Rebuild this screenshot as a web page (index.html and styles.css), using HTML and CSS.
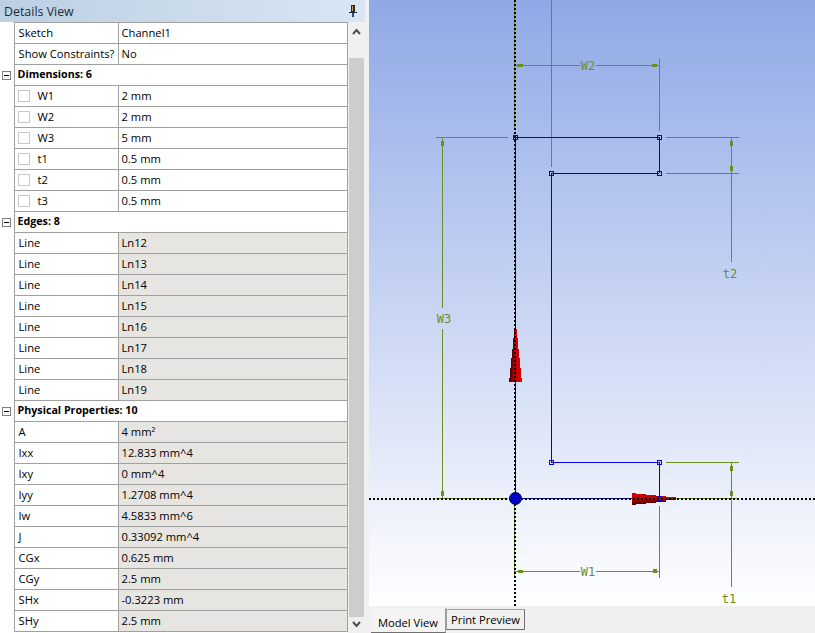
FILE: index.html
```html
<!DOCTYPE html>
<html lang="en">
<head>
    <meta charset="UTF-8">
    <title>Details View</title>
    <link rel="stylesheet" href="styles.css">
</head>
<body>
    <div class="app">
        <div class="details">
            <div class="title-bar">
                <span>Details View</span>
                <svg class="pin" width="8" height="12" viewBox="0 0 8 12">
                    <rect x="2" y="0" width="4" height="7" fill="#1a2a4a"/>
                    <rect x="3" y="1" width="1" height="5" fill="#d9a441"/>
                    <rect x="0" y="7" width="8" height="1" fill="#1a2a4a"/>
                    <rect x="3" y="8" width="2" height="4" fill="#3b4a66"/>
                </svg>
            </div>
            <div class="details-body">
                <table class="grid">
                    <colgroup>
                        <col class="col-gutter">
                        <col class="col-name">
                        <col class="col-value">
                    </colgroup>
                    <tr><td class="gutter"></td><td>Sketch</td><td>Channel1</td></tr>
                    <tr><td class="gutter"></td><td>Show Constraints?</td><td>No</td></tr>
                    <tr class="group"><td class="gutter"><span class="minus"></span></td><td colspan="2">Dimensions: 6</td></tr>
                    <tr><td class="gutter"></td><td><span class="check"></span>W1</td><td>2 mm</td></tr>
                    <tr><td class="gutter"></td><td><span class="check"></span>W2</td><td>2 mm</td></tr>
                    <tr><td class="gutter"></td><td><span class="check"></span>W3</td><td>5 mm</td></tr>
                    <tr><td class="gutter"></td><td><span class="check"></span>t1</td><td>0.5 mm</td></tr>
                    <tr><td class="gutter"></td><td><span class="check"></span>t2</td><td>0.5 mm</td></tr>
                    <tr><td class="gutter"></td><td><span class="check"></span>t3</td><td>0.5 mm</td></tr>
                    <tr class="group"><td class="gutter"><span class="minus"></span></td><td colspan="2">Edges: 8</td></tr>
                    <tr class="ro"><td class="gutter"></td><td>Line</td><td>Ln12</td></tr>
                    <tr class="ro"><td class="gutter"></td><td>Line</td><td>Ln13</td></tr>
                    <tr class="ro"><td class="gutter"></td><td>Line</td><td>Ln14</td></tr>
                    <tr class="ro"><td class="gutter"></td><td>Line</td><td>Ln15</td></tr>
                    <tr class="ro"><td class="gutter"></td><td>Line</td><td>Ln16</td></tr>
                    <tr class="ro"><td class="gutter"></td><td>Line</td><td>Ln17</td></tr>
                    <tr class="ro"><td class="gutter"></td><td>Line</td><td>Ln18</td></tr>
                    <tr class="ro"><td class="gutter"></td><td>Line</td><td>Ln19</td></tr>
                    <tr class="group"><td class="gutter"><span class="minus"></span></td><td colspan="2">Physical Properties: 10</td></tr>
                    <tr class="ro"><td class="gutter"></td><td>A</td><td>4 mm²</td></tr>
                    <tr class="ro"><td class="gutter"></td><td>Ixx</td><td>12.833 mm^4</td></tr>
                    <tr class="ro"><td class="gutter"></td><td>Ixy</td><td>0 mm^4</td></tr>
                    <tr class="ro"><td class="gutter"></td><td>Iyy</td><td>1.2708 mm^4</td></tr>
                    <tr class="ro"><td class="gutter"></td><td>Iw</td><td>4.5833 mm^6</td></tr>
                    <tr class="ro"><td class="gutter"></td><td>J</td><td>0.33092 mm^4</td></tr>
                    <tr class="ro"><td class="gutter"></td><td>CGx</td><td>0.625 mm</td></tr>
                    <tr class="ro"><td class="gutter"></td><td>CGy</td><td>2.5 mm</td></tr>
                    <tr class="ro"><td class="gutter"></td><td>SHx</td><td>-0.3223 mm</td></tr>
                    <tr class="ro"><td class="gutter"></td><td>SHy</td><td>2.5 mm</td></tr>
                </table>
                <div class="scrollbar">
                    <svg class="arrow" width="17" height="36" viewBox="0 0 17 36">
                        <polyline points="5,12 8.5,8 12,12" fill="none" stroke="#505050" stroke-width="2"/>
                    </svg>
                    <div class="thumb"></div>
                    <svg class="arrow" width="17" height="16" viewBox="0 0 17 16">
                        <polyline points="5,5 8.5,9 12,5" fill="none" stroke="#505050" stroke-width="2"/>
                    </svg>
                </div>
            </div>
        </div>

        <div class="view">
            <svg class="sketch" width="446" height="606" viewBox="369 0 446 606">
                <defs>
                    <linearGradient id="coneUp" x1="0" y1="0" x2="1" y2="0">
                        <stop offset="0" stop-color="#4a0000"/>
                        <stop offset="0.45" stop-color="#cc0000"/>
                        <stop offset="1" stop-color="#d40000"/>
                    </linearGradient>
                    <linearGradient id="coneRight" x1="0" y1="0" x2="0" y2="1">
                        <stop offset="0" stop-color="#d40000"/>
                        <stop offset="0.5" stop-color="#b80000"/>
                        <stop offset="1" stop-color="#4a0000"/>
                    </linearGradient>
                </defs>

                <!-- dimensions -->
                <g class="dim">
                    <line x1="514.5" y1="0" x2="514.5" y2="130"/>
                    <line x1="514.5" y1="498" x2="514.5" y2="578"/>
                    <line x1="551.5" y1="0" x2="551.5" y2="167"/>
                    <line x1="659.5" y1="59" x2="659.5" y2="131"/>
                    <line x1="515" y1="65.5" x2="580" y2="65.5"/>
                    <line x1="596" y1="65.5" x2="659" y2="65.5"/>

                    <line x1="436" y1="137.5" x2="508" y2="137.5"/>
                    <line x1="666" y1="137.5" x2="739" y2="137.5"/>
                    <line x1="666" y1="173.5" x2="739" y2="173.5"/>
                    <line x1="442.5" y1="137" x2="442.5" y2="308"/>
                    <line x1="442.5" y1="329" x2="442.5" y2="498"/>
                    <line x1="436" y1="498.5" x2="508" y2="498.5"/>

                    <line x1="731.5" y1="137" x2="731.5" y2="262"/>
                    <line x1="731.5" y1="462" x2="731.5" y2="587"/>
                    <line x1="666" y1="462.5" x2="739" y2="462.5"/>
                    <line x1="666" y1="498.5" x2="739" y2="498.5"/>

                    <line x1="659.5" y1="506" x2="659.5" y2="578"/>
                    <line x1="515" y1="571.5" x2="580" y2="571.5"/>
                    <line x1="596" y1="571.5" x2="659" y2="571.5"/>
                </g>
                <g class="tick">
                    <rect x="517" y="64" width="6" height="3"/>
                    <rect x="652" y="64" width="5" height="3"/>
                    <rect x="441" y="141" width="3" height="5"/>
                    <rect x="441" y="491" width="3" height="5"/>
                    <rect x="730" y="141" width="3" height="5"/>
                    <rect x="730" y="166" width="3" height="5"/>
                    <rect x="730" y="466" width="3" height="5"/>
                    <rect x="730" y="491" width="3" height="5"/>
                    <rect x="518" y="570" width="5" height="3"/>
                    <rect x="653" y="569" width="4" height="4"/>
                </g>
                <g class="dim-label">
                    <text x="588" y="70">W2</text>
                    <text x="444" y="323">W3</text>
                    <text x="730" y="278">t2</text>
                    <text x="729" y="603">t1</text>
                    <text x="588" y="576">W1</text>
                </g>

                <!-- sketch outline -->
                <g class="edge">
                    <line x1="515.5" y1="137" x2="515.5" y2="498"/>
                    <line x1="515" y1="137.5" x2="659" y2="137.5"/>
                    <line x1="659.5" y1="137" x2="659.5" y2="173"/>
                    <line x1="551" y1="173.5" x2="659" y2="173.5"/>
                    <line x1="551.5" y1="173" x2="551.5" y2="462"/>
                    <line x1="551" y1="462.5" x2="659" y2="462.5"/>
                    <line x1="659.5" y1="462" x2="659.5" y2="498"/>
                    <line x1="515" y1="498.5" x2="659" y2="498.5"/>
                </g>

                <!-- axis triad -->
                <g fill="url(#coneUp)">
                    <rect x="514" y="329" width="3" height="9"/>
                    <rect x="513" y="338" width="5" height="11"/>
                    <rect x="512" y="349" width="7" height="9"/>
                    <rect x="511" y="358" width="9" height="10"/>
                    <rect x="510" y="368" width="11" height="10"/>
                    <rect x="509" y="378" width="13" height="4"/>
                </g>
                <g fill="url(#coneRight)">
                    <rect x="632" y="493" width="4" height="12"/>
                    <rect x="636" y="494" width="10" height="10"/>
                    <rect x="646" y="495" width="10" height="8"/>
                    <rect x="656" y="496" width="10" height="6"/>
                    <rect x="666" y="497" width="10" height="3"/>
                </g>
                <line class="axis" x1="515" y1="0" x2="515" y2="606"/>
                <line class="axis" x1="369" y1="499" x2="815" y2="499"/>
                <circle cx="515.5" cy="498.5" r="6" fill="#0000b8" stroke="#000050" stroke-width="1"/>

                <!-- vertices -->
                <g class="node">
                    <rect x="513.5" y="135.5" width="4" height="4"/>
                    <rect x="657.5" y="135.5" width="4" height="4"/>
                    <rect x="549.5" y="171.5" width="4" height="4"/>
                    <rect x="657.5" y="171.5" width="4" height="4"/>
                    <rect x="549.5" y="460.5" width="4" height="4"/>
                    <rect x="657.5" y="460.5" width="4" height="4"/>
                    <rect x="657.5" y="496.5" width="4" height="4"/>
                    <rect x="513.5" y="496.5" width="4" height="4"/>
                </g>
            </svg>
            <div class="tabs">
                <div class="tab active">Model View</div>
                <div class="tab">Print Preview</div>
            </div>
        </div>
    </div>
</body>
</html>
```

FILE: styles.css
```css
html, body {
    margin: 0;
    padding: 0;
}
body {
    width: 815px;
    height: 633px;
    overflow: hidden;
    background-color: #f0f0f0;
    font-family: "Open Sans", "Liberation Sans", sans-serif;
    font-size: 11.2px;
    color: #000;
}
.app {
    display: flex;
    height: 633px;
}

/* left panel */
.details {
    width: 369px;
    flex: none;
}
.title-bar {
    display: flex;
    justify-content: space-between;
    align-items: center;
    width: 365px;
    height: 22px;
    box-sizing: border-box;
    padding: 0 8px 0 4px;
    background: linear-gradient(to right, #bccfe3, #d8e6f4);
    font-size: 12.4px;
    color: #1c2c3c;
}
.details-body {
    display: flex;
    width: 365px;
    height: 611px;
    background-color: #fff;
}
.grid {
    width: 347px;
    height: 610px;
    flex: none;
    table-layout: fixed;
    border-collapse: collapse;
}
.col-gutter { width: 14px; }
.col-name { width: 104px; }
.col-value { width: 229px; }
.grid tr {
    height: 21px;
}
.grid td {
    border: 1px solid #a0a0a0;
    padding: 0 0 2px 4px;
    white-space: nowrap;
    overflow: hidden;
}
.grid td:last-child {
    padding-left: 3px;
}
.grid td.gutter {
    border: none;
    border-right: 1px solid #a0a0a0;
    padding: 0 0 0 2px;
}
.grid tr.ro td:last-child {
    background-color: #e6e5e1;
}
.grid tr.group td {
    font-weight: bold;
    font-size: 10.7px;
}
.minus {
    display: block;
    position: relative;
    width: 7px;
    height: 7px;
    border: 1px solid #808080;
    background-color: #fff;
}
.minus::after {
    content: "";
    position: absolute;
    left: 1px;
    right: 1px;
    top: 3px;
    height: 1px;
    background-color: #000;
}
.check {
    display: inline-block;
    vertical-align: middle;
    width: 10px;
    height: 10px;
    margin: -1px 8px 0 -1px;
    border: 1px solid #c8c8c8;
}

/* scrollbar */
.scrollbar {
    display: flex;
    flex-direction: column;
    width: 18px;
    background-color: #f0f0f0;
}
.arrow {
    flex: none;
}
.thumb {
    flex: 1;
    margin: 0 1px;
    background-color: #cdcdcd;
}

/* model view */
.view {
    display: flex;
    flex-direction: column;
    width: 446px;
}
.sketch {
    display: block;
    flex: none;
    background: linear-gradient(to bottom, #90a9e6, #ffffff);
}
.dim line {
    stroke: #6b8e23;
    stroke-width: 1;
    shape-rendering: crispEdges;
}
.tick rect {
    fill: #6b8e23;
    shape-rendering: crispEdges;
}
.dim-label text {
    font-family: "DejaVu Sans Mono", monospace;
    font-size: 12px;
    fill: #6b8e23;
    text-anchor: middle;
}
.edge line {
    stroke: #0000e6;
    stroke-width: 1;
    shape-rendering: crispEdges;
}
.axis {
    stroke: #000;
    stroke-width: 2;
    stroke-dasharray: 2 2;
    shape-rendering: crispEdges;
}
.node rect {
    fill: none;
    stroke: #0000e6;
    stroke-width: 1;
    shape-rendering: crispEdges;
}

.tabs {
    display: flex;
    align-items: flex-start;
    padding: 2px 0 0 2px;
}
.tab {
    box-sizing: border-box;
    width: 79px;
    height: 21px;
    margin-top: 1px;
    border: 1px solid #a0a0a0;
    border-right-color: #707070;
    border-bottom-color: #707070;
    text-align: center;
    line-height: 19px;
    white-space: nowrap;
}
.tab.active {
    width: 75px;
    height: 25px;
    margin-top: 0;
    padding-top: 5px;
    border-top: none;
    border-left: none;
    border-right-color: #a0a0a0;
    background-color: #f4f4f4;
}
```
